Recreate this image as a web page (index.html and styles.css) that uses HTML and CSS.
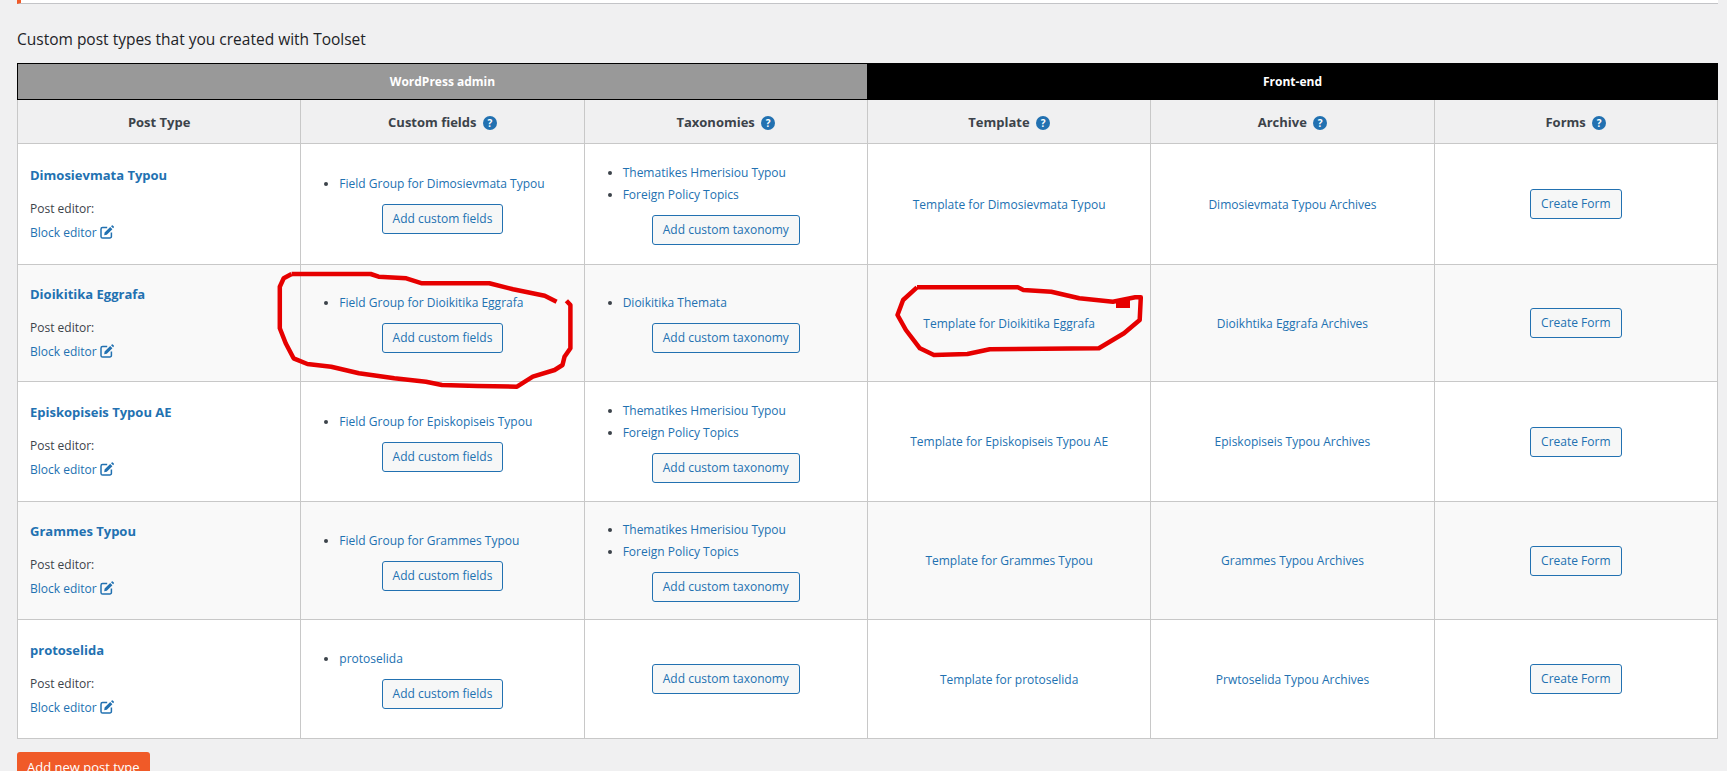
FILE: index.html
```html
<!DOCTYPE html>
<html lang="en">
<head>
<meta charset="utf-8">
<title>Toolset Dashboard</title>
<link rel="stylesheet" href="styles.css">
</head>
<body>
<svg width="0" height="0" class="defs" aria-hidden="true">
  <symbol id="edit" viewBox="0 0 14 14">
    <path d="M7.2 2.6H2.6A1.6 1.6 0 0 0 1 4.2v7.2A1.6 1.6 0 0 0 2.6 13h7.2a1.6 1.6 0 0 0 1.6-1.6V7.6" fill="none" stroke="currentColor" stroke-width="1.5"/>
    <path d="M4.6 7.6 10.2 2l2.2 2.2-5.6 5.6-2.6.5zM11 1.2 11.8.5a.8.8 0 0 1 1 0l1 1a.8.8 0 0 1 0 1l-.7.8z" fill="currentColor"/>
  </symbol>
</svg>
<div class="page">
  <div class="notice"></div>
  <h3 class="title">Custom post types that you created with Toolset</h3>
  <table class="types">
    <thead>
      <tr class="group-row">
        <th colspan="3" class="group group-admin">WordPress admin</th>
        <th colspan="3" class="group group-front">Front-end</th>
      </tr>
      <tr class="head-row">
        <th>Post Type</th>
        <th>Custom fields <span class="help">?</span></th>
        <th>Taxonomies <span class="help">?</span></th>
        <th class="divide">Template <span class="help">?</span></th>
        <th>Archive <span class="help">?</span></th>
        <th>Forms <span class="help">?</span></th>
      </tr>
    </thead>
    <tbody>
      <tr class="r1">
        <td class="name"><a class="type-link" href="#">Dimosievmata Typou</a><p class="editor-label">Post editor:</p><a href="#" class="editor-link">Block editor <svg class="edit-icon"><use href="#edit"/></svg></a></td>
        <td><ul><li><a href="#">Field Group for Dimosievmata Typou</a></li></ul><a class="btn" href="#">Add custom fields</a></td>
        <td><ul><li><a href="#">Thematikes Hmerisiou Typou</a></li><li><a href="#">Foreign Policy Topics</a></li></ul><a class="btn" href="#">Add custom taxonomy</a></td>
        <td class="center divide"><a href="#">Template for Dimosievmata Typou</a></td>
        <td class="center"><a href="#">Dimosievmata Typou Archives</a></td>
        <td class="center"><a class="btn btn-form" href="#">Create Form</a></td>
      </tr>
      <tr class="r2">
        <td class="name"><a class="type-link" href="#">Dioikitika Eggrafa</a><p class="editor-label">Post editor:</p><a href="#" class="editor-link">Block editor <svg class="edit-icon"><use href="#edit"/></svg></a></td>
        <td><ul><li><a href="#">Field Group for Dioikitika Eggrafa</a></li></ul><a class="btn" href="#">Add custom fields</a></td>
        <td><ul><li><a href="#">Dioikitika Themata</a></li></ul><a class="btn" href="#">Add custom taxonomy</a></td>
        <td class="center divide"><a href="#">Template for Dioikitika Eggrafa</a></td>
        <td class="center"><a href="#">Dioikhtika Eggrafa Archives</a></td>
        <td class="center"><a class="btn btn-form" href="#">Create Form</a></td>
      </tr>
      <tr class="r3">
        <td class="name"><a class="type-link" href="#">Episkopiseis Typou AE</a><p class="editor-label">Post editor:</p><a href="#" class="editor-link">Block editor <svg class="edit-icon"><use href="#edit"/></svg></a></td>
        <td><ul><li><a href="#">Field Group for Episkopiseis Typou</a></li></ul><a class="btn" href="#">Add custom fields</a></td>
        <td><ul><li><a href="#">Thematikes Hmerisiou Typou</a></li><li><a href="#">Foreign Policy Topics</a></li></ul><a class="btn" href="#">Add custom taxonomy</a></td>
        <td class="center divide"><a href="#">Template for Episkopiseis Typou AE</a></td>
        <td class="center"><a href="#">Episkopiseis Typou Archives</a></td>
        <td class="center"><a class="btn btn-form" href="#">Create Form</a></td>
      </tr>
      <tr class="r4">
        <td class="name"><a class="type-link" href="#">Grammes Typou</a><p class="editor-label">Post editor:</p><a href="#" class="editor-link">Block editor <svg class="edit-icon"><use href="#edit"/></svg></a></td>
        <td><ul><li><a href="#">Field Group for Grammes Typou</a></li></ul><a class="btn" href="#">Add custom fields</a></td>
        <td><ul><li><a href="#">Thematikes Hmerisiou Typou</a></li><li><a href="#">Foreign Policy Topics</a></li></ul><a class="btn" href="#">Add custom taxonomy</a></td>
        <td class="center divide"><a href="#">Template for Grammes Typou</a></td>
        <td class="center"><a href="#">Grammes Typou Archives</a></td>
        <td class="center"><a class="btn btn-form" href="#">Create Form</a></td>
      </tr>
      <tr class="r5">
        <td class="name"><a class="type-link" href="#">protoselida</a><p class="editor-label">Post editor:</p><a href="#" class="editor-link">Block editor <svg class="edit-icon"><use href="#edit"/></svg></a></td>
        <td><ul><li><a href="#">protoselida</a></li></ul><a class="btn" href="#">Add custom fields</a></td>
        <td><a class="btn" href="#">Add custom taxonomy</a></td>
        <td class="center divide"><a href="#">Template for protoselida</a></td>
        <td class="center"><a href="#">Prwtoselida Typou Archives</a></td>
        <td class="center"><a class="btn btn-form" href="#">Create Form</a></td>
      </tr>
    </tbody>
  </table>
  <a class="btn-primary" href="#">Add new post type</a>
</div>
<svg class="scribbles" width="1727" height="771" viewBox="0 0 1727 771" aria-hidden="true">
  <path class="ink" d="M291.6 274 370.7 274 378.6 276.7 406.3 278.3 422 283.3 489.3 283.3 513 289.3 544.7 295.7 556.6 301.7"/>
  <path class="ink" d="M566.4 300.7 570.4 305 570.4 348.3 564.5 356.7 562.5 365 554.6 370 532.8 376.7 517 386.7 477.5 386 441.9 385 426 381.7 394.4 378.3 358.9 373.3 331.2 366.7 307.4 364 293.6 358.3 285.7 343.3 279.8 328.3 279.8 286.7 283.7 278.3 291.6 274"/>
  <path class="ink" d="M917 287.3 1017.8 287.3 1023.4 290 1051.3 291.7 1079.3 298.3 1112.9 301.7 1135.2 297.3 1140.8 297.3 1139.7 320 1124 333.3 1098.9 348.3 989.8 349.3 967.4 354 933.9 355 919.9 348.3 905.9 330 897.5 315 903.1 300 917 287.3"/>
  <rect class="blob" x="1116" y="300" width="14" height="8"/>
</svg>
</body>
</html>
```
FILE: styles.css
```css
html, body {
  margin: 0;
  height: 100%;
  overflow: hidden;
}
body {
  background: #f0f0f1;
  color: #3c434a;
  font-family: "Open Sans", "Liberation Sans", sans-serif;
  font-size: 12px;
}
.defs { position: absolute; }
.page { padding: 0 9px 0 17px; }
.notice {
  height: 3px;
  background: #fff;
  border-left: 4px solid #f05a28;
  border-bottom: 1px solid #c3c4c7;
}
.title {
  margin: 24px 0 13px;
  font-size: 15.5px;
  font-weight: 400;
  line-height: 22px;
  color: #1d2327;
}
.types {
  width: 1701px;
  table-layout: fixed;
  border-collapse: collapse;
  background: #fff;
}
.types th, .types td {
  border: 1px solid #c8c8c8;
  text-align: center;
  vertical-align: middle;
  padding: 0 12px;
}
.group-row { height: 36px; }
.types .group {
  color: #fff;
  font-size: 12px;
  font-weight: 700;
  border: 1px solid #000;
}
.group-admin { background: #999; }
.group-front { background: #000; }
.head-row { height: 44px; }
.head-row th {
  background: #f0f0f1;
  font-size: 13px;
  font-weight: 700;
  color: #3c434a;
}
.help {
  display: inline-block;
  width: 14px;
  height: 14px;
  margin-left: 3px;
  border-radius: 50%;
  background: #2271b1;
  color: #fff;
  font-size: 10px;
  line-height: 14px;
  vertical-align: 0;
  text-align: center;
}
.types .divide { border-left: 1px solid #000; }
.r1 { height: 121px; }
.r2 { height: 117px; }
.r3 { height: 120px; }
.r4 { height: 118px; }
.r5 { height: 119px; }
tbody tr:nth-child(even) { background: #f9f9f9; }
a {
  color: #2271b1;
  text-decoration: none;
}
.types td.name { text-align: left; }
.type-link {
  font-size: 13px;
  font-weight: 700;
}
.editor-label {
  margin: 15px 0 0;
  line-height: 20px;
  font-size: 12px;
}
.editor-link {
  display: block;
  margin-top: 4px;
  line-height: 20px;
}
.edit-icon {
  width: 14px;
  height: 14px;
  vertical-align: -2px;
  color: #2271b1;
}
ul {
  margin: 0 0 10px;
  padding: 0 0 0 26px;
  text-align: left;
}
li {
  line-height: 20px;
  margin-bottom: 2px;
}
li:last-child { margin-bottom: 0; }
.btn {
  display: inline-block;
  box-sizing: border-box;
  height: 30px;
  line-height: 28px;
  padding: 0 10px;
  border: 1px solid #2271b1;
  border-radius: 3px;
  background: #f6f7f7;
  font-size: 12px;
}
.btn-primary {
  display: inline-block;
  box-sizing: border-box;
  height: 32px;
  line-height: 30px;
  margin-top: 13px;
  padding: 0 10px;
  background: #f05a28;
  border-radius: 3px;
  color: #fff;
  font-size: 13px;
}
.scribbles {
  position: absolute;
  top: 0;
  left: 0;
  pointer-events: none;
}
.ink {
  fill: none;
  stroke: #e60000;
  stroke-width: 4.5;
  stroke-linejoin: round;
}
.blob { fill: #e60000; }
```
